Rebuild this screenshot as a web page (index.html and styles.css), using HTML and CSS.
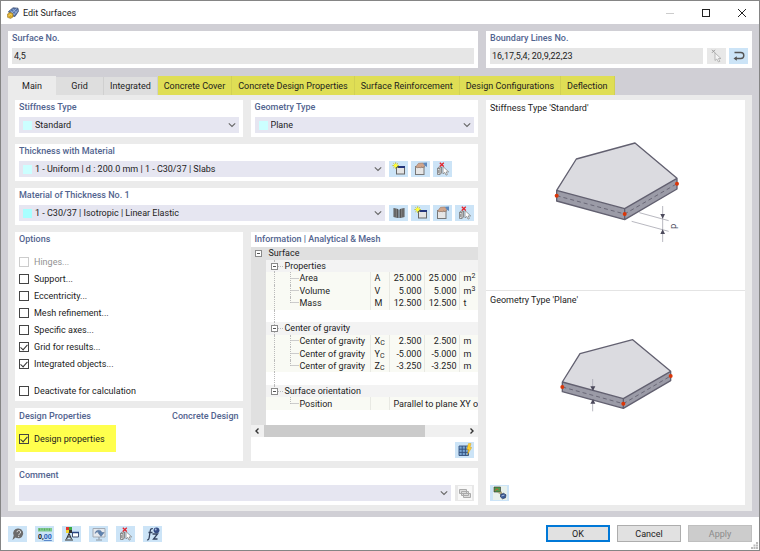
FILE: index.html
```html
<!DOCTYPE html>
<html lang="en">
<head>
    <meta charset="UTF-8">
    <meta name="viewport" content="width=device-width, initial-scale=1.0">
    <title>Edit Surfaces</title>
    <link rel="stylesheet" href="styles.css">
</head>
<body>
    <!-- shared icons -->
    <svg class="defs" aria-hidden="true">
        <symbol id="chevron" viewBox="0 0 8 8"><path d="M.8 2.300 4 5.500 7.200 2.300" fill="none" stroke="#666" stroke-width="1.100"/></symbol>
        <symbol id="new" viewBox="0 0 14 14">
            <rect x="4.500" y="4.500" width="8" height="7.500" fill="#e4e4e4" stroke="#666"/>
            <path d="M4 5h9" stroke="#24367c" stroke-width="2"/>
            <path d="M3.700.3v6.600M.4 3.600H7M1.400 1.300 6 5.900M6 1.300 1.400 5.900" stroke="#c4bd18" stroke-width=".9"/>
            <circle cx="3.700" cy="3.600" r="1.800" fill="#ffff38"/>
        </symbol>
        <symbol id="edit" viewBox="0 0 14 14">
            <rect x="1.500" y="4.500" width="8.500" height="8" fill="#e6e6e6" stroke="#777"/>
            <path d="M1 5h9.500" stroke="#888" stroke-width="1.400"/>
            <path d="M2 4.500 4.500 1.300 9 1 11 3.500 9 5.800 7.500 4.800 6.500 6 5 5.200 3.500 6Z" fill="#cfa58c" stroke="#8b6a58" stroke-width=".5"/>
            <path d="M9 .8 13 .6V5L10.800 3.800Z" fill="#5c88bd"/>
        </symbol>
        <symbol id="pick" viewBox="0 0 14 14">
            <path d="M1.500 6.200 3 5h2.500v6L4 12.500H1.500ZM1.500 6.500H4v6M4 6.500 5.500 5M2.700 8v3" fill="#ddd" stroke="#777" stroke-width=".8"/>
            <path d="M7 4.500v7.400l1.800-1.500 1.200 2.700 1.400-.6-1.200-2.600h2.500Z" fill="#fff" stroke="#777" stroke-width=".7"/>
            <path d="m3.800.8 4 3.600m0-3.600-4 3.600" stroke="#e3242c" stroke-width="1.300"/>
        </symbol>
    </svg>

    <div class="dialog">
        <header class="titlebar">
            <svg class="app-icon" viewBox="0 0 12 12">
                <path d="M1.500 4.500 6 .8l5 .4.5 3L8 9.500l-4-.8Z" fill="#5876ab" stroke="#364667" stroke-width=".7"/>
                <path d="M3.500 3.500 7.500 8M5.500 1.700 9.500 6M4 6.500 9.500 1.500M6.500 8.200l4.500-5" stroke="#a9bee0" stroke-width=".8"/>
                <path d="M.5 7 3 5.200l3 1.500V10L3.500 11.500.5 10.300Z" fill="#d9a92a" stroke="#8c6c1b" stroke-width=".5"/>
                <path d="M1.500 8.800 3.500 7.500l1.500.8" fill="none" stroke="#f7db7a"/>
            </svg>
            <h1>Edit Surfaces</h1>
            <div class="window-controls">
                <button aria-label="Minimize" disabled><svg viewBox="0 0 10 10"><path d="M1 5.500h8" stroke="#ccc"/></svg></button>
                <button aria-label="Maximize"><svg viewBox="0 0 10 10"><rect x="1.500" y="1.500" width="7" height="7" fill="none" stroke="#222"/></svg></button>
                <button aria-label="Close"><svg viewBox="0 0 10 10"><path d="m1 1 8 8m0-8L1 9" stroke="#222"/></svg></button>
            </div>
        </header>

        <main class="body">
            <div class="numbers">
                <section class="panel">
                    <label class="panel-title" for="surface-no">Surface No.</label>
                    <div class="field-row"><input class="field" id="surface-no" type="text" value="4,5" readonly></div>
                </section>
                <section class="panel">
                    <label class="panel-title" for="lines-no">Boundary Lines No.</label>
                    <div class="field-row">
                        <input class="field" id="lines-no" type="text" value="16,17,5,4; 20,9,22,23" readonly>
                        <div class="tools">
                            <button class="tool tool-off" aria-label="Select lines" disabled>
                                <svg viewBox="0 0 14 14"><path d="m2 .8 3 3m0-3-3 3" stroke="#999"/><path d="M5 4v7.500l1.800-1.500L8.500 13l1.400-.7-1.500-2.800H11Z" fill="#f5f5f5" stroke="#aaa" stroke-width=".8"/></svg>
                            </button>
                            <button class="tool" aria-label="Reverse orientation">
                                <svg viewBox="0 0 14 14"><path d="M2.500 3.500h6.300a2.900 2.900 0 0 1 0 6H3" fill="none" stroke="#555" stroke-width="1.400"/><path d="M4.800 7.200v4.600L1.500 9.500Z" fill="#555"/></svg>
                            </button>
                        </div>
                    </div>
                </section>
            </div>

            <div class="tabs" role="tablist">
                <button class="tab active" role="tab" aria-selected="true">Main</button>
                <button class="tab" role="tab">Grid</button>
                <button class="tab" role="tab">Integrated</button>
                <button class="tab marked" role="tab">Concrete Cover</button>
                <button class="tab marked" role="tab">Concrete Design Properties</button>
                <button class="tab marked" role="tab">Surface Reinforcement</button>
                <button class="tab marked" role="tab">Design Configurations</button>
                <button class="tab marked" role="tab">Deflection</button>
            </div>

            <div class="page">
                <div class="settings">
                    <div class="pair">
                        <section class="panel">
                            <label class="panel-title" for="stiffness">Stiffness Type</label>
                            <div class="field-row">
                                <div class="combo"><select class="field swatch" id="stiffness"><option>Standard</option></select><svg><use href="#chevron"/></svg></div>
                            </div>
                        </section>
                        <section class="panel">
                            <label class="panel-title" for="geometry">Geometry Type</label>
                            <div class="field-row">
                                <div class="combo"><select class="field swatch" id="geometry"><option>Plane</option></select><svg><use href="#chevron"/></svg></div>
                            </div>
                        </section>
                    </div>

                    <section class="panel">
                        <label class="panel-title" for="thickness">Thickness with Material</label>
                        <div class="field-row">
                            <div class="combo"><select class="field swatch" id="thickness"><option>1 - Uniform | d : 200.0 mm | 1 - C30/37 | Slabs</option></select><svg><use href="#chevron"/></svg></div>
                            <div class="tools tools-four">
                                <button class="tool" aria-label="New thickness"><svg><use href="#new"/></svg></button>
                                <button class="tool" aria-label="Edit thickness"><svg><use href="#edit"/></svg></button>
                                <button class="tool" aria-label="Pick thickness"><svg><use href="#pick"/></svg></button>
                            </div>
                        </div>
                    </section>

                    <section class="panel">
                        <label class="panel-title" for="material">Material of Thickness No. 1</label>
                        <div class="field-row">
                            <div class="combo"><select class="field swatch swatch-strong" id="material"><option>1 - C30/37 | Isotropic | Linear Elastic</option></select><svg><use href="#chevron"/></svg></div>
                            <div class="tools tools-four">
                                <button class="tool" aria-label="Material library">
                                    <svg viewBox="0 0 14 14"><path d="M1.500 2 6 3v9l-4.500-1ZM12.500 2 8 3v9l4.500-1Z" fill="#555"/><path d="M3 2.500v8.800M4.500 3v8.600M9.500 3v8.600M11 2.500v8.800" stroke="#999" stroke-width=".6"/><path d="M7 3.500V12" stroke="#333"/></svg>
                                </button>
                                <button class="tool" aria-label="New material"><svg><use href="#new"/></svg></button>
                                <button class="tool" aria-label="Edit material"><svg><use href="#edit"/></svg></button>
                                <button class="tool" aria-label="Pick material"><svg><use href="#pick"/></svg></button>
                            </div>
                        </div>
                    </section>

                    <div class="pair details">
                        <div class="stack">
                            <section class="panel options">
                                <h2 class="panel-title">Options</h2>
                                <div class="checks">
                                    <label class="check"><input type="checkbox" disabled>Hinges...</label>
                                    <label class="check"><input type="checkbox">Support...</label>
                                    <label class="check"><input type="checkbox">Eccentricity...</label>
                                    <label class="check"><input type="checkbox">Mesh refinement...</label>
                                    <label class="check"><input type="checkbox">Specific axes...</label>
                                    <label class="check"><input type="checkbox" checked>Grid for results...</label>
                                    <label class="check"><input type="checkbox" checked>Integrated objects...</label>
                                    <label class="check apart"><input type="checkbox">Deactivate for calculation</label>
                                </div>
                            </section>
                            <section class="panel design">
                                <div class="title-row">
                                    <h2 class="panel-title">Design Properties</h2>
                                    <span class="panel-title">Concrete Design</span>
                                </div>
                                <label class="check highlight"><input type="checkbox" checked>Design properties</label>
                            </section>
                        </div>

                        <section class="panel info">
                            <h2 class="panel-title">Information | Analytical &amp; Mesh</h2>
                            <table class="tree">
                                <colgroup><col class="c-gutter"><col><col class="c-symbol"><col class="c-value"><col class="c-value"><col class="c-unit"></colgroup>
                                <tbody>
                                    <tr class="root"><td class="gutter"><span class="toggle"></span></td><td colspan="5">Surface</td></tr>
                                    <tr class="group"><td class="gutter"></td><td colspan="5"><span class="toggle"></span>Properties</td></tr>
                                    <tr class="leaf"><td class="gutter"></td><td>Area</td><td>A</td><td>25.000</td><td>25.000</td><td>m<sup>2</sup></td></tr>
                                    <tr class="leaf"><td class="gutter"></td><td>Volume</td><td>V</td><td>5.000</td><td>5.000</td><td>m<sup>3</sup></td></tr>
                                    <tr class="leaf last"><td class="gutter"></td><td>Mass</td><td>M</td><td>12.500</td><td>12.500</td><td>t</td></tr>
                                    <tr class="blank"><td class="gutter"></td><td colspan="5"></td></tr>
                                    <tr class="group"><td class="gutter"></td><td colspan="5"><span class="toggle"></span>Center of gravity</td></tr>
                                    <tr class="leaf"><td class="gutter"></td><td>Center of gravity</td><td>X<sub>C</sub></td><td>2.500</td><td>2.500</td><td>m</td></tr>
                                    <tr class="leaf"><td class="gutter"></td><td>Center of gravity</td><td>Y<sub>C</sub></td><td>-5.000</td><td>-5.000</td><td>m</td></tr>
                                    <tr class="leaf last"><td class="gutter"></td><td>Center of gravity</td><td>Z<sub>C</sub></td><td>-3.250</td><td>-3.250</td><td>m</td></tr>
                                    <tr class="blank"><td class="gutter"></td><td colspan="5"></td></tr>
                                    <tr class="group end"><td class="gutter"></td><td colspan="5"><span class="toggle"></span>Surface orientation</td></tr>
                                    <tr class="leaf last end"><td class="gutter"></td><td>Position</td><td></td><td class="wide" colspan="3">Parallel to plane XY o</td></tr>
                                </tbody>
                            </table>
                            <div class="tree-rest"></div>
                            <div class="scrollbar">
                                <svg viewBox="0 0 8 8"><path d="M5.500 1.500 3 4l2.500 2.500" fill="none" stroke="#333" stroke-width="1.400"/></svg>
                                <div class="track"><div class="thumb"></div></div>
                                <svg viewBox="0 0 8 8"><path d="M2.500 1.500 5 4 2.500 6.500" fill="none" stroke="#333" stroke-width="1.400"/></svg>
                            </div>
                            <div class="info-foot">
                                <button class="tool" aria-label="Recalculate mesh">
                                    <svg viewBox="0 0 14 14"><rect x="1" y="3" width="9.500" height="9.500" fill="#7aa7d4"/><path d="M1 3h9.500v9.500H1ZM1 6.200h9.500M1 9.400h9.500M4.200 3v9.500M7.400 3v9.500" fill="none" stroke="#33507a" stroke-width=".9"/><path d="m10.500.5 2.500 0-1 4h1.700L9.500 11.500l1-5H8.800Z" fill="#ffd02e" stroke="#d39b12" stroke-width=".4"/></svg>
                                </button>
                            </div>
                        </section>
                    </div>

                    <section class="panel">
                        <label class="panel-title" for="comment">Comment</label>
                        <div class="field-row">
                            <div class="combo"><select class="field" id="comment"><option></option></select><svg><use href="#chevron"/></svg></div>
                            <button class="tool tool-off" aria-label="Comment templates" disabled>
                                <svg viewBox="0 0 14 14"><path d="M0 0h14v14H0Z" fill="#f8f8f8"/><path d="M1.500 3.500h7v4h-7ZM3.500 5.500h7v4h-7ZM5.500 7.500h7v4h-7Z" fill="#ddd" stroke="#aaa"/></svg>
                            </button>
                        </div>
                    </section>
                </div>

                <aside class="preview">
                    <figure class="sketch">
                        <figcaption>Stiffness Type 'Standard'</figcaption>
                        <svg viewBox="-13 0 540 390" width="180" height="130">
                            <path d="M79 211 138 117 314 69 440 175 283 266Z" fill="#dbdbe0"/>
                            <path d="M79 211 283 266V299L79 243ZM283 266 440 175V207L283 299Z" fill="#9b9ba7"/>
                            <path d="M79 211 138 117 314 69 440 175 283 266ZM79 211V243L283 299 440 207V175M283 266V299" fill="none" stroke="#626070" stroke-width="4" stroke-linejoin="round"/>
                            <path d="M79 227 283 282 440 191" fill="none" stroke="#5f5d6c" stroke-width="2.500" stroke-dasharray="12 9"/>
                            <g fill="#db3608"><circle cx="79" cy="227" r="6"/><circle cx="283" cy="282" r="6"/><circle cx="440" cy="191" r="6"/></g>
                            <path d="M327 278 415 302M304 304 415 334M397 258V366" fill="none" stroke="#aaaab3" stroke-width="2.500"/>
                            <path d="m390 282h14l-7 14ZM390 342h14l-7-14Z" fill="#4c4a5c"/>
                            <text class="dim" x="421" y="311" transform="rotate(90 421 311)">d</text>
                        </svg>
                    </figure>
                    <figure class="sketch">
                        <figcaption>Geometry Type 'Plane'</figcaption>
                        <svg viewBox="-13 0 540 330" width="180" height="110">
                            <path d="M96 186 149 101 307 59 421 154 279 236Z" fill="#dbdbe0"/>
                            <path d="M96 186 279 236V265L96 215ZM279 236 421 154V182L279 265Z" fill="#9b9ba7"/>
                            <path d="M96 186 149 101 307 59 421 154 279 236ZM96 186V215L279 265 421 182V154M279 236V265" fill="none" stroke="#626070" stroke-width="4" stroke-linejoin="round"/>
                            <path d="M96 201 279 251 421 168" fill="none" stroke="#5f5d6c" stroke-width="2.500" stroke-dasharray="12 9"/>
                            <g fill="#db3608"><circle cx="96" cy="201" r="6"/><circle cx="279" cy="251" r="6"/><circle cx="421" cy="168" r="6"/></g>
                            <path d="M187 177V204M187 248V274" stroke="#aaaab3" stroke-width="2.500"/>
                            <path d="m180 199h15l-7 14ZM180 251h15l-7-14Z" fill="#4c4a5c"/>
                        </svg>
                    </figure>
                    <div class="preview-foot">
                        <button class="tool" aria-label="Switch preview">
                            <svg viewBox="0 0 14 14"><path d="M0 0h14v14H0Z" fill="#e8f1ec"/><path d="M1 1h6.500v5H1Z" fill="#4f9a4a" stroke="#333" stroke-width=".6"/><path d="m2 4.800 2-2 1.500 1.500" stroke="#d95030" fill="none"/><path d="M4 6.500 9 9V5.500Z" fill="#aaa67e"/><path d="m7.500 8.500 3-1.200 2.500 1.500-.5 3-3 1L7.500 11Z" fill="#3b5b96" stroke="#1f2c4c" stroke-width=".6"/><path d="m8.500 10 3-1" stroke="#a9bee0"/></svg>
                        </button>
                    </div>
                </aside>
            </div>
        </main>

        <footer class="footer">
            <div class="footer-tools">
                <button class="tool" aria-label="Help">
                    <svg viewBox="0 0 14 14"><path d="M7.500 1.500a5 5 0 0 1 3.500 8.300C9 11.800 6 11.500 4.500 10.500L1.500 13l1.200-4.500A4.800 4.800 0 0 1 7.500 1.500Z" fill="#6b6b6b"/><path d="M6 5.200a1.800 1.800 0 1 1 2.500 1.700c-.6.300-.8.600-.8 1.200M7.700 8.900v1.100" fill="none" stroke="#ddd" stroke-width="1"/></svg>
                </button>
                <button class="tool" aria-label="Units and decimals">
                    <svg viewBox="0 0 14 14"><path d="M0 1h14v3.500H0Z" fill="#7fc98b"/><path d="M1.500 1.500v2M4 1.500v1.500M6.500 1.500v2M9 1.500v1.500M11.500 1.500v2" stroke="#4a9a58" stroke-width=".7"/><text class="icon-num" x="0" y="12">0,<tspan class="icon-blue">00</tspan></text></svg>
                </button>
                <button class="tool" aria-label="Display settings">
                    <svg viewBox="0 0 14 14"><path d="M1 0h3v3H1Z" fill="#e5352b"/><path d="M4 0h3v3H4Z" fill="#39a842"/><path d="M1 3h3v3H1Z" fill="#f0d22b"/><path d="M4 3h3v3H4Z" fill="#333"/><path d="M1.500 12 4 6.500 6.500 12M2.500 10h3M0 13h8" fill="none" stroke="#333" stroke-width="1.100"/><path d="M7.500 5.500h6v4.500h-6Z" fill="#fff" stroke="#3f4f74"/><path d="M7 5.500h7" stroke="#294482" stroke-width="1.500"/></svg>
                </button>
                <button class="tool" aria-label="View settings">
                    <svg viewBox="0 0 14 14"><path d="M1 1.500h12v8.500H1Z" fill="#e5e9ee" stroke="#a3abb5"/><path d="M7 10v2.500M4 13h6" stroke="#8c949e"/><path d="M3 6.500C3.500 2.500 9 2 9.800 5.500h2.400L9 9.500 5.800 5.500h1.700C7 4.300 4.500 4.500 3 6.500Z" fill="#5f83b0" stroke="#3c5a86" stroke-width=".4"/></svg>
                </button>
                <button class="tool" aria-label="Pick object"><svg><use href="#pick"/></svg></button>
                <button class="tool" aria-label="Formula">
                    <svg viewBox="0 0 14 14"><path d="M1 12.800c1.500.3 1.900-.6 2.200-2.300l1-6.500C4.500 2.200 5.200 1.300 6.800 1.700M2.500 5.500h4" fill="none" stroke="#33435f" stroke-width="1.300"/><path d="M6.500 7h5l-4 5h4" fill="none" stroke="#33435f" stroke-width="1.300"/><circle cx="10.500" cy="3.300" r="2.900" fill="#344c84"/><circle cx="9.700" cy="2.500" r=".9" fill="#a9bee0"/></svg>
                </button>
            </div>
            <div class="actions">
                <button class="action default">OK</button>
                <button class="action">Cancel</button>
                <button class="action" disabled>Apply</button>
            </div>
            <svg class="grip" viewBox="0 0 7 7"><path d="M5 0h2v2H5ZM2.500 2.500h2v2h-2ZM5 2.500h2v2H5ZM0 5h2v2H0ZM2.500 5h2v2h-2ZM5 5h2v2H5Z" fill="#bbb"/></svg>
        </footer>
    </div>
</body>
</html>
```
FILE: styles.css
```css
* {
    box-sizing: border-box;
}
body {
    margin: 0;
    font-family: Roboto, "Open Sans", sans-serif;
    font-size: 9px;
    line-height: 10px;
    color: #1c1c1c;
    background: #fff;
}
button, input, select {
    margin: 0;
    padding: 0;
    border: 0;
    border-radius: 0;
    font: inherit;
    color: inherit;
    background: none;
}
h1, h2, figure {
    margin: 0;
    font: inherit;
}
svg {
    display: block;
}
.defs {
    position: absolute;
    width: 0;
    height: 0;
}
.dialog {
    display: flex;
    flex-direction: column;
    min-height: 100vh;
    border: 1px solid #858585;
}

/* title bar */
.titlebar {
    display: flex;
    align-items: center;
    gap: 4px;
    height: 23px;
    padding: 0 10px 0 6px;
}
.app-icon {
    width: 12px;
    height: 12px;
}
.window-controls {
    display: flex;
    gap: 26px;
    margin-left: auto;
    padding-right: 2px;
}
.window-controls button, .window-controls svg {
    width: 10px;
    height: 10px;
}

/* body */
.body {
    flex: 1;
    display: flex;
    flex-direction: column;
    padding: 7px 7px 6px;
    background: #d0cfd5;
}
.numbers {
    display: grid;
    grid-template-columns: 470fr 266fr;
    gap: 8px;
}
.panel {
    padding: 2px 4px 4px;
    background: #fff;
}
.panel-title {
    display: block;
    color: #52648f;
    font-weight: 500;
}
.field-row {
    display: flex;
    gap: 4px;
    margin-top: 5px;
}
.field {
    display: block;
    flex: 1;
    width: 100%;
    min-width: 0;
    height: 16px;
    padding: 0 2px;
    background-color: #e6e6e6;
    outline: 0;
}
.tools {
    display: flex;
    gap: 3px;
}
.tools-four {
    width: 85px;
}
.tool {
    display: flex;
    justify-content: center;
    align-items: center;
    width: 19px;
    height: 16px;
    background: #cce4f7;
}
.tool svg {
    width: 14px;
    height: 14px;
}
.tool-off {
    background: #e8e8e8;
}
.combo {
    position: relative;
    flex: 1;
    min-width: 0;
}
.combo select {
    appearance: none;
    background-color: #e6e6f1;
}
.combo svg {
    position: absolute;
    top: 4px;
    right: 3px;
    width: 8px;
    height: 8px;
    pointer-events: none;
}
.combo .swatch {
    padding-left: 16px;
    background-image: linear-gradient(#ccffff, #ccffff);
    background-repeat: no-repeat;
    background-position: 4px 4px;
    background-size: 9px 9px;
}
.combo .swatch-strong {
    background-image: linear-gradient(#a8ffff, #a8ffff);
}

/* tabs */
.tabs {
    display: flex;
    align-items: flex-end;
    margin-top: 8px;
}
.tab {
    min-width: 48px;
    height: 18px;
    padding: 0 6px;
    background: #dedede;
    border-right: 1px solid #d0d0d0;
    white-space: nowrap;
}
.tab.active {
    height: 19px;
    background: #ebebeb;
    border-right: 0;
}
.tab.marked {
    height: 19px;
    background: #dfde55;
    border-color: #d2d152;
}
.page {
    flex: 1;
    display: grid;
    grid-template-columns: 463fr 259fr;
    gap: 8px;
    padding: 5px 7px 6px;
    background: #ebebeb;
}
.settings {
    display: flex;
    flex-direction: column;
    gap: 7px;
    min-width: 0;
}
.pair {
    display: grid;
    grid-template-columns: 1fr 1fr;
    gap: 8px;
}
.details {
    flex: 1;
}
.stack {
    display: flex;
    flex-direction: column;
    gap: 7px;
}
.options {
    flex: 1;
    padding-bottom: 1px;
}

/* check boxes */
.checks {
    margin-top: 9px;
}
.check {
    display: flex;
    align-items: center;
    gap: 5px;
    height: 17px;
}
.check.apart {
    margin-top: 10px;
}
.check:has(input:disabled) {
    color: #929292;
}
.check input {
    appearance: none;
    display: flex;
    justify-content: center;
    width: 10px;
    height: 10px;
    border: 1px solid #444;
    background: #fff;
}
.check input:disabled {
    border-color: #ccc;
}
.check input:checked::after {
    content: "";
    width: 3px;
    height: 6px;
    border: solid #333;
    border-width: 0 1px 1px 0;
    transform: rotate(42deg);
}
.design {
    padding: 3px 0 9px;
}
.title-row {
    display: flex;
    justify-content: space-between;
    padding: 0 4px;
}
.check.highlight {
    width: 100px;
    height: 27px;
    margin: 4px 0 0 1px;
    padding-left: 3px;
    background: #ffff4d;
}
.check.highlight input {
    background: none;
}

/* information tree */
.info {
    display: flex;
    flex-direction: column;
    min-width: 0;
    padding: 2px 0 3px;
}
.info .panel-title {
    padding: 0 4px;
    margin-bottom: 3px;
}
.tree {
    width: 100%;
    height: 163px;
    table-layout: fixed;
    border-collapse: collapse;
    white-space: nowrap;
}
.c-gutter { width: 15px; }
.c-symbol { width: 19px; }
.c-value { width: 35px; }
.c-unit { width: 18px; }
.tree td {
    position: relative;
    height: 12px;
    padding: 0;
    overflow: hidden;
}
.tree .gutter, .root td {
    background: #e0e0e0;
}
.root td + td {
    padding-left: 3px;
}
.group td + td {
    padding-left: 19px;
    background: #f3f3f3;
}
.leaf td + td {
    padding-left: 3px;
    background: #f9faf4;
    border-right: 1px solid #e8e9e3;
}
.leaf td:nth-child(2) {
    padding-left: 34px;
}
.leaf td:nth-child(4), .leaf td:nth-child(5) {
    padding: 0 3px 0 0;
    text-align: right;
}
.leaf td:last-child {
    border-right: 0;
}
.leaf td.wide {
    padding: 0 0 0 3px;
    text-align: left;
}
/* expand boxes and the dotted branches between them */
.toggle {
    position: absolute;
    top: 3px;
    left: 5px;
    width: 7px;
    height: 7px;
    border: 1px solid #8a8a8a;
    background: linear-gradient(#555, #555) center / 3px 1px no-repeat #fff;
    z-index: 1;
}
.gutter .toggle {
    left: 4px;
}
.group td + td::before, .leaf td:nth-child(2)::before, .blank td + td::before {
    content: "";
    position: absolute;
    top: 0;
    bottom: 0;
    left: 8px;
    border-left: 1px dotted #bbb;
}
.group.end td + td::before {
    bottom: 50%;
}
.leaf.end td:nth-child(2)::before {
    display: none;
}
.group td + td::after {
    content: "";
    position: absolute;
    top: 6px;
    left: 12px;
    width: 5px;
    border-top: 1px dotted #bbb;
}
.leaf td:nth-child(2)::after {
    content: "";
    position: absolute;
    top: 0;
    bottom: 0;
    left: 24px;
    width: 8px;
    border-left: 1px dotted #bbb;
    background: linear-gradient(#ccc, #ccc) center / 8px 1px no-repeat;
}
.leaf.last td:nth-child(2)::after {
    bottom: 50%;
    background-position: bottom;
}
sub, sup {
    font-size: 7px;
    line-height: 0;
}
sub {
    vertical-align: -1px;
}
sup {
    vertical-align: 3px;
}
.tree-rest {
    flex: 1;
    border-left: 15px solid #e0e0e0;
}
.scrollbar {
    display: flex;
    align-items: center;
    height: 12px;
    padding: 0 2px;
    background: #f0f0f0;
}
.scrollbar svg {
    width: 8px;
    height: 8px;
}
.track {
    flex: 1;
    height: 12px;
    padding: 0 3px;
}
.thumb {
    width: 80%;
    height: 12px;
    background: #cbcbcb;
}
.info-foot {
    display: flex;
    justify-content: flex-end;
    padding: 5px 4px 0;
}

/* preview */
.preview {
    display: flex;
    flex-direction: column;
    background: #fff;
}
.sketch {
    padding: 3px 4px 0;
}
.sketch svg {
    margin: 7px auto 0;
}
.sketch + .sketch {
    margin-top: 40px;
    padding-top: 4px;
    border-top: 1px solid #e4e4e4;
}
.sketch + .sketch svg {
    margin-top: 15px;
}
.dim {
    font-size: 28px;
    fill: #4c4a5c;
}
.preview-foot {
    margin-top: auto;
    padding: 4px;
}

/* footer */
.footer {
    position: relative;
    display: flex;
    justify-content: space-between;
    align-items: center;
    height: 33px;
    padding: 0 7px;
}
.footer-tools {
    display: flex;
    gap: 8px;
}
.actions {
    display: flex;
    gap: 7px;
}
.action {
    width: 64px;
    height: 17px;
    background: #e1e1e1;
    border: 1px solid #adadad;
}
.action.default {
    border: 2px solid #0078d7;
}
.action:disabled {
    color: #8b8b8b;
    background: #ccc;
    border-color: #bfbfbf;
}
.grip {
    position: absolute;
    right: 1px;
    bottom: 1px;
    width: 7px;
    height: 7px;
}
.icon-num {
    font-size: 7px;
    font-weight: 700;
    fill: #222;
}
.icon-blue {
    fill: #2b62b8;
    text-decoration: underline;
}
```
